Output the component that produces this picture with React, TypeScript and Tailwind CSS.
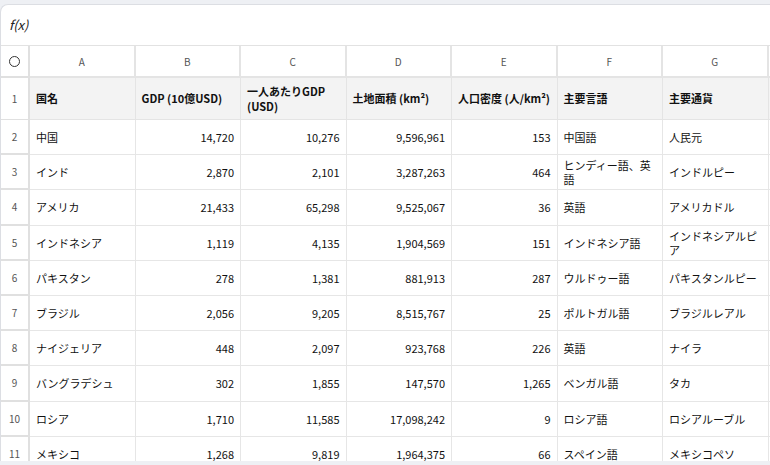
const cols = ['A', 'B', 'C', 'D', 'E', 'F', 'G']

const header = ['国名', 'GDP (10億USD)', '一人あたりGDP (USD)', '土地面積 (km²)', '人口密度 (人/km²)', '主要言語', '主要通貨']

const rows: string[][] = [
  ['中国', '14,720', '10,276', '9,596,961', '153', '中国語', '人民元'],
  ['インド', '2,870', '2,101', '3,287,263', '464', 'ヒンディー語、英語', 'インドルピー'],
  ['アメリカ', '21,433', '65,298', '9,525,067', '36', '英語', 'アメリカドル'],
  ['インドネシア', '1,119', '4,135', '1,904,569', '151', 'インドネシア語', 'インドネシアルピア'],
  ['パキスタン', '278', '1,381', '881,913', '287', 'ウルドゥー語', 'パキスタンルピー'],
  ['ブラジル', '2,056', '9,205', '8,515,767', '25', 'ポルトガル語', 'ブラジルレアル'],
  ['ナイジェリア', '448', '2,097', '923,768', '226', '英語', 'ナイラ'],
  ['バングラデシュ', '302', '1,855', '147,570', '1,265', 'ベンガル語', 'タカ'],
  ['ロシア', '1,710', '11,585', '17,098,242', '9', 'ロシア語', 'ロシアルーブル'],
  ['メキシコ', '1,268', '9,819', '1,964,375', '66', 'スペイン語', 'メキシコペソ'],
]

const grid = 'grid grid-cols-[29px_repeat(7,105.5px)_40px]'

export default function App() {
  return (
    <div
      className="w-[770px] h-[465px] overflow-hidden bg-[#eef0f4] pt-1"
      style={{ fontFamily: '"Noto Sans CJK JP", "Noto Sans", sans-serif' }}
    >
      <div className="h-[457px] bg-white rounded-tl-lg border-t border-l border-[#dcdee3] overflow-hidden">
        <div className="h-[41px] flex items-center px-2 text-[13px] italic text-[#222] border-b border-[#e2e2e2]">
          f(x)
        </div>
        <div className={`${grid} h-[32px] text-[10px] text-[#555]`}>
          <div className="flex items-center justify-center border-r-2 border-b-2 border-[#e0e0e0]">
            <span className="w-[11px] h-[11px] rounded-full border border-[#333]" />
          </div>
          {cols.map((c) => (
            <div key={c} className="flex items-center justify-center border-r-2 border-b-2 border-[#e4e4e4]">
              {c}
            </div>
          ))}
          <div className="border-b-2 border-[#e4e4e4]" />
        </div>
        <div className={`${grid} h-[42px] text-[11px] font-bold text-[#111]`}>
          <div className="flex items-center justify-center border-r-2 border-b border-[#e0e0e0] bg-white font-normal text-[10px] text-[#555]">
            1
          </div>
          {header.map((h) => (
            <div key={h} className="flex items-center px-1.5 leading-[15px] bg-[#f3f3f3] border-r border-b border-[#e4e4e4]">
              {h}
            </div>
          ))}
          <div className="bg-[#f3f3f3] border-b border-[#e4e4e4]" />
        </div>
        {rows.map((r, i) => (
          <div key={i} className={`${grid} h-[35.2px] text-[11px] text-[#111]`}>
            <div className="flex items-center justify-center border-r-2 border-b-2 border-[#e0e0e0] text-[10px] text-[#555]">
              {i + 2}
            </div>
            {r.map((v, j) => (
              <div
                key={j}
                className={`flex items-center px-1.5 leading-[14px] border-r border-b border-[#e6e6e6] ${
                  j >= 1 && j <= 4 ? 'justify-end' : ''
                }`}
              >
                {v}
              </div>
            ))}
            <div className="border-b border-[#e6e6e6]" />
          </div>
        ))}
      </div>
    </div>
  )
}
